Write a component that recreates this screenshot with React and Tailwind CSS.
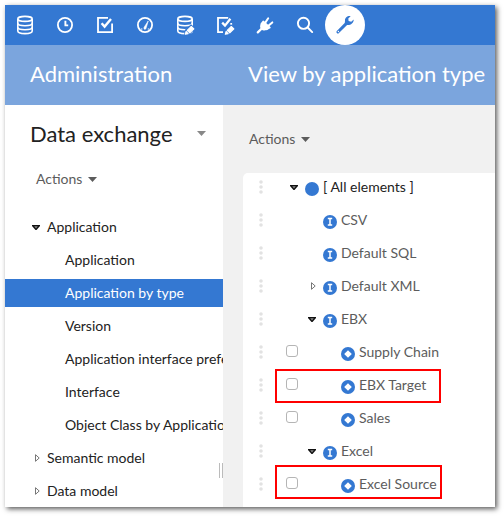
import React from "react";

const BLUE = "#3478d2";

function DatabaseShape() {
  return (
    <g fill="none" stroke="currentColor" strokeWidth="1.6">
      <ellipse cx="10" cy="3.9" rx="7.2" ry="2.5" />
      <path d="M2.8 4v12c0 1.5 3.1 2.6 7.2 2.6s7.2-1.1 7.2-2.6V4" />
      <path d="M2.8 8.2c0 1.4 3.1 2.5 7.2 2.5s7.2-1.1 7.2-2.5M2.8 12.2c0 1.4 3.1 2.5 7.2 2.5s7.2-1.1 7.2-2.5" />
    </g>
  );
}

function Pencil() {
  return (
    <g>
      <path d="M9 20.5 10 14.8 16 9.2 20.5 13.2 14.6 20Z" fill={BLUE} />
      <path d="M10.3 19.3 11.1 16.5 13.2 18.6Z M12.2 15.4 16.3 11.5 18.9 13.8 14.8 17.8Z" fill="currentColor" stroke="currentColor" strokeWidth="1.1" strokeLinejoin="round" />
    </g>
  );
}

const icons = {
  database: <DatabaseShape />,
  clock: (
    <g fill="none" stroke="currentColor">
      <circle cx="10" cy="10" r="7.1" strokeWidth="1.8" />
      <path d="M10.4 5.7V10.4M9.5 10.4H13.2" strokeWidth="1.9" />
    </g>
  ),
  check: (
    <g fill="none" stroke="currentColor" strokeWidth="1.8">
      <path d="M13 2.9H3v14.2h14.1V8.5" />
      <path d="m6.6 8.2 3 3.4 6.4-7.6" strokeWidth="2.4" />
    </g>
  ),
  gauge: (
    <g fill="none" stroke="currentColor">
      <circle cx="10" cy="10" r="7.1" strokeWidth="1.8" />
      <path d="M13.2 6 9 12.4Q8.5 14.4 10 14.3 11.2 14.2 11.2 12.8Z" fill="currentColor" strokeWidth=".6" />
      <path d="M5.8 14h1.6M12.8 14h1.5" strokeWidth="1.2" />
    </g>
  ),
  databaseEdit: (
    <g>
      <DatabaseShape />
      <Pencil />
    </g>
  ),
  checkEdit: (
    <g>
      <g fill="none" stroke="currentColor" strokeWidth="1.8">
        <path d="M8 17.1H3V2.9H13.2M16.2 8v3" />
        <path d="m7.2 7.6 2.8 3 5.4-6.8" strokeWidth="2.3" />
      </g>
      <Pencil />
    </g>
  ),
  plug: (
    <g stroke="currentColor" strokeLinecap="round" fill="none">
      <path d="M2.8 17.4 7.5 12.8" strokeWidth="2.3" />
      <path d="M6.7 7.8 13.5 13.8C11 16 7.8 15.8 6.2 14.2 4.6 12.5 4.6 9.9 6.7 7.8Z" fill="currentColor" strokeWidth="0" />
      <path d="M8.3 6.2 15 12.6 11.7 14.5 6.2 9Z" fill="currentColor" strokeWidth="1.4" strokeLinejoin="round" />
      <path d="M10.3 7.6 13.2 3.3M13.7 10.6 17.3 7.4" strokeWidth="2" />
    </g>
  ),
  search: (
    <g fill="none" stroke="currentColor" strokeWidth="1.9" strokeLinecap="round">
      <circle cx="8.5" cy="8.3" r="5.6" />
      <path d="m12.7 12.5 4.5 4.6" />
    </g>
  ),
  wrench: (
    <g>
      <path d="M2.9 17 11 8.9" stroke="currentColor" strokeWidth="3" strokeLinecap="round" />
      <path d="M15.6 1.2C12.8.6 9.8 2.6 10 5.6L9.8 8 11.7 10C15.3 10.6 18.8 8.2 18.7 4.4L16.2 6.7 13.6 5.9 13.3 3.5Z" fill="currentColor" />
      <circle cx="3.4" cy="16.5" r=".7" fill="white" />
    </g>
  ),
};

function Icon({ name }) {
  return (
    <svg viewBox="0 0 20 20" className="size-5">
      {icons[name]}
    </svg>
  );
}

function Caret({ className = "" }) {
  return (
    <svg viewBox="0 0 9 5" className={`h-[5px] w-[9px] shrink-0 ${className}`}>
      <path d="M0 0h9L4.5 5Z" fill="currentColor" />
    </svg>
  );
}

function Twisty({ open }) {
  return open ? (
    <svg viewBox="0 0 8 5" className="h-[5px] w-2 shrink-0">
      <path d="M0 0h8v1L4.5 5h-1L0 1Z" fill="#111" />
      <path d="M2.2 1.3h3.6L4 3.5Z" fill="#888" />
    </svg>
  ) : (
    <svg viewBox="0 0 6 8" className="h-2 w-[6px] shrink-0">
      <path d="M1.5 .7V7.3L5.2 4Z" fill="none" stroke="#777" />
    </svg>
  );
}

const navItems = [
  { label: "Application", open: true },
  { label: "Application", child: true },
  { label: "Application by type", child: true, active: true },
  { label: "Version", child: true },
  { label: "Application interface preferences", child: true },
  { label: "Interface", child: true },
  { label: "Object Class by Application", child: true },
  { label: "Semantic model", open: false },
  { label: "Data model", open: false },
];

function NavItem({ label, child, open, active }) {
  return (
    <li className={`flex h-7 items-center whitespace-nowrap ${active ? "bg-[#3478d2] text-white" : "text-[#222]"}`}>
      <span className={`flex shrink-0 items-center justify-end ${child ? "w-[60px]" : "w-[42px] pr-[7px]"}`}>
        {!child && <Twisty open={open} />}
      </span>
      <span>{label}</span>
    </li>
  );
}

const tree = [
  { label: "[ All elements ]", kind: "root", open: true },
  { label: "CSV", kind: "type" },
  { label: "Default SQL", kind: "type" },
  { label: "Default XML", kind: "type", open: false },
  { label: "EBX", kind: "type", open: true },
  { label: "Supply Chain", kind: "item" },
  { label: "EBX Target", kind: "item", outlined: "top-[-2px] w-[166px]" },
  { label: "Sales", kind: "item" },
  { label: "Excel", kind: "type", open: true },
  { label: "Excel Source", kind: "item", outlined: "top-[-5px] w-[167px]" },
];

function TreeRow({ label, kind, open, outlined }) {
  return (
    <li className={`relative flex h-7 items-center whitespace-nowrap ${kind === "root" ? "text-[#222]" : "text-[#5c5c5c]"}`}>
      <svg viewBox="0 0 4 14" className="ml-4 h-[14px] w-1 shrink-0" fill="#e2e2e2">
        <circle cx="2" cy="2" r="1.8" />
        <circle cx="2" cy="7" r="1.8" />
        <circle cx="2" cy="12" r="1.8" />
      </svg>
      {kind === "item" ? (
        <span className="ml-[23px] flex w-[55px] shrink-0">
          <span className="mb-[2px] size-3 rounded-[3px] border border-[#b5b5b5]" />
        </span>
      ) : (
        <span className={`flex shrink-0 items-center justify-end pr-[7px] ${kind === "root" ? "w-[42px]" : "w-[60px]"}`}>
          {open !== undefined && <Twisty open={open} />}
        </span>
      )}
      <svg viewBox="0 0 14 14" className="mt-1 size-[14px] shrink-0">
        <circle cx="7" cy="7" r="7" fill={BLUE} />
        {kind === "type" && <path d="M4.8 3.5h4.4M4.8 10h4.4M7 3.5v6.5" stroke="white" strokeWidth="1.5" />}
        {kind === "item" && <path d="M7 3.2 10.8 7 7 10.8 3.2 7Z" fill="white" />}
      </svg>
      <span className="ml-1">{label}</span>
      {outlined && <span className={`absolute left-8 h-[34px] border-2 border-[#f00] ${outlined}`} />}
    </li>
  );
}

export default function App() {
  return (
    <div className="h-[516px] w-[504px] overflow-hidden bg-white p-[5px] font-['Lato',sans-serif] text-[14px] leading-5">
      <div className="flex h-[502px] w-[490px] flex-col overflow-hidden bg-white shadow-[2px_2px_5px_rgba(0,0,0,0.65)]">
        <nav className="flex h-10 shrink-0 bg-[#3478d2] text-white">
          {Object.keys(icons).map((name) => (
            <button key={name} className={`flex size-10 items-center justify-center ${name === "wrench" ? "rounded-full bg-white text-[#3478d2]" : ""}`}>
              <Icon name={name} />
            </button>
          ))}
        </nav>
        <header className="flex h-[60px] shrink-0 items-center bg-[#7ba5dd] pb-[2px] text-[22px] whitespace-nowrap text-white">
          <h1 className="w-[243px] shrink-0 pl-[25px]">Administration</h1>
          <h2>View by application type</h2>
        </header>
        <div className="flex min-h-0 grow">
          <aside className="relative w-[218px] shrink-0 overflow-hidden">
            <div className="flex h-[58px] items-center justify-between pr-[17px] pl-[25px] text-[22px] text-[#222]">
              <span>Data exchange</span>
              <Caret className="mb-[2px] h-[4px] w-[8px] text-[#888]" />
            </div>
            <div className="flex h-[50px] items-center pb-[18px] pl-[31px] text-[#5c5c5c]">
              Actions
              <Caret className="ml-[6px]" />
            </div>
            <ul className="flex flex-col gap-[5px]">
              {navItems.map((item, i) => <NavItem key={i} {...item} />)}
            </ul>
            <span className="absolute right-0 bottom-[29px] h-[15px] w-1 border-x border-[#bbb]" />
          </aside>
          <main className="flex grow flex-col overflow-hidden bg-[#f1f1f1] pl-5">
            <div className="flex h-[68px] shrink-0 items-center pl-[6px] text-[#5c5c5c]">
              Actions
              <Caret className="ml-[6px]" />
            </div>
            <ul className="flex grow flex-col gap-[5px] rounded-tl-[5px] bg-white">
              {tree.map((row) => <TreeRow key={row.label} {...row} />)}
            </ul>
          </main>
        </div>
      </div>
    </div>
  );
}
